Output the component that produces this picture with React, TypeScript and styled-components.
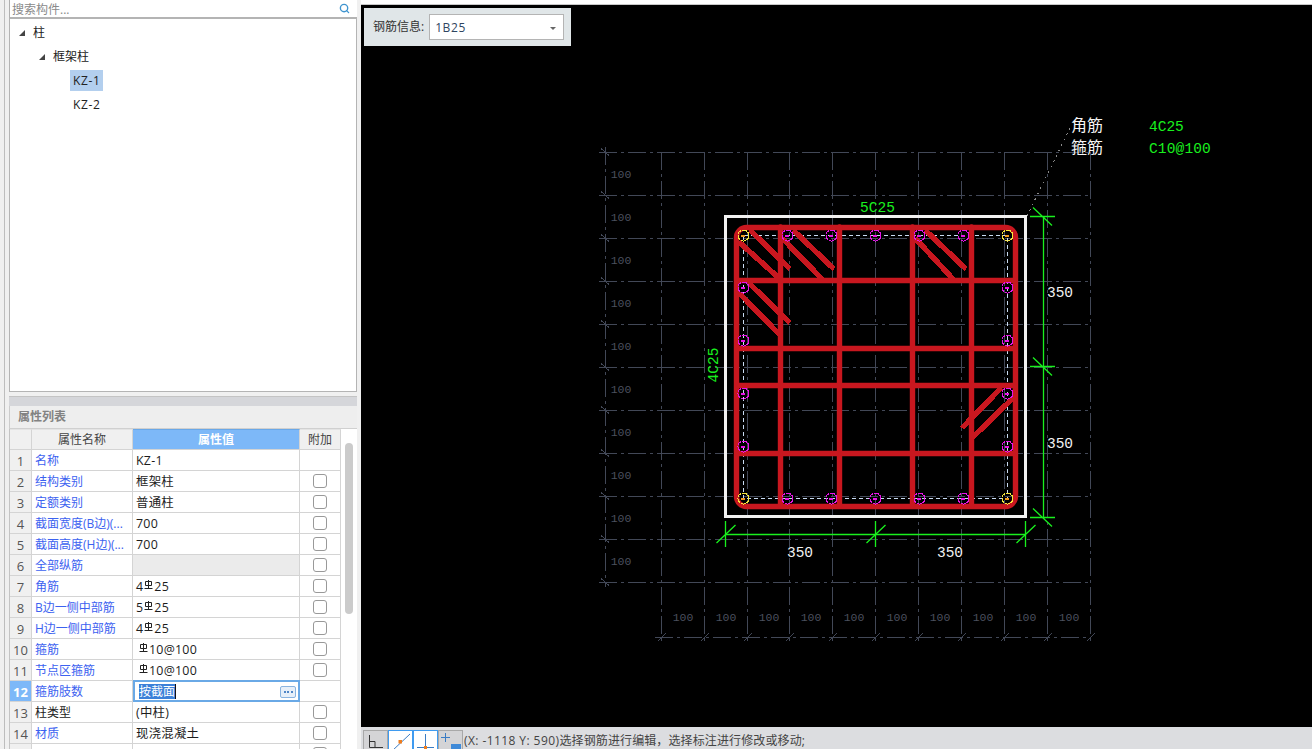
import React from 'react';
import styled, { createGlobalStyle } from 'styled-components';
import { Search } from 'lucide-react';

const UI_FONT = '"Open Sans", "Noto Sans CJK SC", sans-serif';
const CAD_FONT = '"Liberation Mono", "Noto Sans CJK SC", monospace';

const Global = createGlobalStyle`
  html, body { margin: 0; padding: 0; background: #f0f0f0; overflow: hidden; }
  * { box-sizing: border-box; }
`;

const Page = styled.div`
  width: 1312px; height: 749px; display: flex; overflow: hidden;
  font: 12px/1 ${UI_FONT}; color: #222;
`;
const LeftColumn = styled.aside`
  width: 361px; height: 749px; flex: none; padding-left: 4px; padding-right: 4px; background: #f0f0f0;
  display: flex; overflow: hidden;
`;
const LeftInner = styled.div`
  width: 353px; border-left: 1px solid #bdbdbd; padding-left: 4px; display: flex; flex-direction: column;
`;
const SearchBar = styled.div`
  height: 19px; flex: none; background: #fff; border-left: 1px solid #b0b0b0; border-bottom: 2px solid #b4b4b4;
  display: flex; align-items: center; justify-content: space-between; padding: 2px 7px 0 2px; color: #8a8a8a;
  svg { color: #3f94cf; margin-top: -2px; }
`;
const TreePanel = styled.div`
  height: 373px; flex: none; background: #fff; border: 1px solid #b4b4b4; border-top: 0; padding-top: 1px;
`;
const TreeRow = styled.div<{ $depth: number }>`
  height: 24px; display: flex; align-items: center; padding: 2px 0 0 ${p => 9 + p.$depth * 20}px; color: #222;
`;
const Arrow = styled.span`
  width: 6px; height: 6px; margin-right: 8px; background: #444; clip-path: polygon(100% 0, 100% 100%, 0 100%);
`;
const TreeLeaf = styled.span<{ $selected?: boolean }>`
  margin: -2px 0 0 11px; padding: 2px 3px 0; height: 21px; display: flex; align-items: center; letter-spacing: .6px;
  background: ${p => (p.$selected ? '#b3cfee' : 'transparent')};
`;
const Splitter = styled.div`
  margin-top: 4px; height: 10px; flex: none; background: #d5d6da; border-top: 1px solid #c4c4c4;
`;
const ListTitle = styled.div`
  height: 23px; flex: none; background: #eeeeee; color: #828282; font-weight: 600; border-bottom: 1px solid #d0d0d0;
  display: flex; align-items: center; padding-left: 8px; border-left: 1px solid #ccc;
`;
const TableWrap = styled.div`
  flex: 1; min-height: 0; display: flex; overflow: hidden; background: #fff; border-left: 1px solid #c4c4c4;
`;
const Table = styled.div` width: 331px; flex: none; `;
const Row = styled.div`
  display: grid; grid-template-columns: 22px 101px 167px 41px; height: 21px; 
`;
const Cell = styled.div`
  border-right: 1px solid #d4d4d4; border-bottom: 1px solid #d4d4d4; display: flex; align-items: center; overflow: hidden; white-space: nowrap;
`;
const HeadCell = styled(Cell)<{ $active?: boolean }>`
  justify-content: center;
  background: ${p => (p.$active ? '#7db8f8' : '#f0f0f0')};
  color: ${p => (p.$active ? '#fff' : '#444')};
  font-weight: ${p => (p.$active ? 700 : 400)};
  border-top: 1px solid ${p => (p.$active ? '#6aa8e8' : '#e4e4e4')};
`;
const NumCell = styled(Cell)<{ $active?: boolean }>`
  justify-content: center; font-size: 13px; padding-top: 2px;
  background: ${p => (p.$active ? '#7db8f8' : '#f0f0f0')};
  color: ${p => (p.$active ? '#fff' : '#555')};
  font-weight: ${p => (p.$active ? 700 : 400)};
`;
const NameCell = styled(Cell)<{ $plain?: boolean }>`
  padding: 2px 0 0 3px; color: ${p => (p.$plain ? '#222' : '#3c62f0')};
`;
const ValueCell = styled(Cell)<{ $muted?: boolean; $indent?: boolean }>`
  padding: 2px 0 0 ${p => (p.$indent ? 5 : 3)}px; color: #1c1c1c; background: ${p => (p.$muted ? '#ebebeb' : '#fff')};
  font-size: 12.4px; letter-spacing: .25px;
`;
const EditCell = styled(Cell)`
  border: 2px solid #6aa9e6; padding: 1px 2px 0 4px; justify-content: space-between; margin: -1px 0 0 0; height: 22px;
`;
const Selected = styled.span`
  background: #3b80d8; color: #fff; height: 15px; display: flex; align-items: center; border-right: 1px solid #111;
`;
const MoreButton = styled.span`
  width: 16px; height: 12px; border: 1px solid #8ab4e0; border-radius: 2px; background: #e6eff9;
  display: flex; align-items: center; justify-content: center; gap: 1.5px; 
  i { width: 2px; height: 2px; background: #4f86c6; display: block; }
`;
const CheckCell = styled(Cell)` justify-content: center; `;
const CheckBox = styled.span`
  width: 14px; height: 14px; border: 1px solid #999; border-radius: 3px; background: #fff; display: block;
`;
const ScrollTrack = styled.div`
  flex: 1; padding: 14px 4px 0 4px; background: #fff;
`;
const ScrollThumb = styled.div` width: 8px; height: 171px; background: #cbcbcb; border-radius: 4px; `;

const RightColumn = styled.main`
  flex: 1; min-width: 0; display: flex; flex-direction: column;
`;
const TopStrip = styled.div` height: 5px; flex: none; background: #fff; border-bottom: 1px solid #c8c8c8; `;
const Canvas = styled.div`
  position: relative; height: 722px; flex: none; background: #000;
  svg { display: block; }
`;
const RebarBar = styled.div`
  position: absolute; left: 3px; top: 3px; width: 207px; height: 38px; background: #e0e6e8;
  display: flex; align-items: center; padding-left: 9px; gap: 5px; color: #333;
`;
const Select = styled.div`
  width: 135px; height: 26px; background: #fff; border: 1px solid #b4b4b4; display: flex; align-items: center;
  justify-content: space-between; padding: 2px 7px 0 5px; color: #2f4560; letter-spacing: .6px;
`;
const Caret = styled.span`
  width: 0; height: 0; border-left: 3px solid transparent; border-right: 3px solid transparent; border-top: 3px solid #666;
`;
const StatusBar = styled.footer`
  flex: 1; background: #dcdde0; display: flex; padding: 3px 0 0 2px; overflow: hidden; color: #444;
`;
const ToolButton = styled.div<{ $on?: boolean }>`
  width: 25px; height: 24px; flex: none; margin-right: 0;
  border: 1px solid ${p => (p.$on ? '#3f9bf0' : '#a8a8a8')};
  background: ${p => (p.$on ? '#fff' : '#d4d4d6')};
  svg { display: block; }
`;
const StatusText = styled.div` line-height: 24px; white-space: nowrap; margin-left: 1px; margin-top: -1px; letter-spacing: .12px; `;
const Coords = styled.span` letter-spacing: .42px; `;
const RebarSvg = styled.svg` width: 9px; height: 11px; margin: -3px 1px 0 1px; flex: none; `;

function Rebar() {
  return (
    <RebarSvg viewBox="0 0 9 11" aria-hidden="true">
      <path d="M1.5 1.500h6v4h-6zM4.500 0v8.500M.5 8.500h8" fill="none" stroke="#222" strokeWidth="1" />
    </RebarSvg>
  );
}

type RowData = { name: string; value?: React.ReactNode; plain?: boolean; muted?: boolean; check?: boolean; indent?: boolean; edit?: boolean };
const rows: RowData[] = [
  { name: '名称', value: 'KZ-1', check: false },
  { name: '结构类别', value: '框架柱', check: true },
  { name: '定额类别', value: '普通柱', check: true },
  { name: '截面宽度(B边)(...', value: '700', check: true },
  { name: '截面高度(H边)(...', value: '700', check: true },
  { name: '全部纵筋', value: '', muted: true, check: true },
  { name: '角筋', value: <>4<Rebar />25</>, check: true },
  { name: 'B边一侧中部筋', value: <>5<Rebar />25</>, check: true },
  { name: 'H边一侧中部筋', value: <>4<Rebar />25</>, check: true },
  { name: '箍筋', value: <><Rebar />10@100</>, check: true, indent: true },
  { name: '节点区箍筋', value: <><Rebar />10@100</>, check: true, indent: true },
  { name: '箍筋肢数', edit: true, check: false },
  { name: '柱类型', value: '(中柱)', plain: true, check: true },
  { name: '材质', value: '现浇混凝土', check: true },
  { name: '', value: '', check: true },
];

const GX = Array.from({ length: 11 }, (_, i) => Math.round(660.6 + i * 42.95) + 0.5);
const GY = Array.from({ length: 11 }, (_, i) => 152.5 + i * 43);
const GRID = '#424857';
const DASH = '18 4 3 4';
const PINK = '#e814e8';
const YELLOW = '#f8e83c';
const RED = '#c8171f';
const GREEN = '#19f01e';

const topRow = [787, 831, 875, 919, 963];
const sideRow = [287, 340, 393, 446];
const diagonals: [number, number, number, number][] = [
  [750, 230, 790, 269], [739, 242, 780, 279], [782, 238, 822, 279], [793, 230, 834, 269],
  [749, 283, 790, 323], [739, 293, 780, 335], [915, 238, 953, 279], [925, 230, 966, 269],
  [1001, 388, 962, 428], [1013, 398, 972, 438],
];

function Bar({ x, y }: { x: number; y: number }) {
  const c = x === 743 || x === 1007;
  const corner = c && (y === 235 || y === 498);
  const col = corner ? YELLOW : PINK;
  return (
    <g shapeRendering="crispEdges">
      <circle cx={x + 0.5} cy={y + 0.5} r={5.5} fill="none" stroke={col} strokeWidth={1} strokeDasharray="5 1" />
      <rect x={x - 2} y={y} width={4} height={2} fill={corner ? '#f09a20' : PINK} />
    </g>
  );
}

function GreenTick({ x, y, dir }: { x: number; y: number; dir: 'h' | 'v' }) {
  return dir === 'h' ? (
    <path d={`M${x - 13} ${y}H${x + 12}M${x - 10} ${y - 9}L${x + 9} ${y + 9}`} stroke={GREEN} strokeWidth={1.3} fill="none" />
  ) : (
    <path d={`M${x} ${y - 13}V${y + 13}M${x - 9} ${y + 9}L${x + 10} ${y - 9}`} stroke={GREEN} strokeWidth={1.3} fill="none" />
  );
}

function Drawing() {
  return (
    <svg width={951} height={722} viewBox="361 5 951 722">
      <g stroke={GRID} strokeWidth={1} strokeDasharray={DASH} shapeRendering="crispEdges">
        {GY.map(y => <line key={y} x1={599} x2={1090.5} y1={y} y2={y} />)}
        {GX.map(x => <line key={x} x1={x} x2={x} y1={152} y2={645} />)}
        <line x1={605.5} x2={605.5} y1={147} y2={587} />
        <line x1={655} x2={1091} y1={637.5} y2={637.5} />
      </g>
      <g stroke={GRID} strokeWidth={1} shapeRendering="crispEdges">
        {GY.map(y => <line key={y} x1={601} x2={609} y1={y - 4} y2={y + 3} />)}
        {GX.map(x => <line key={x} x1={x - 4} x2={x + 4} y1={641.5} y2={633.5} />)}
      </g>
      <g fill="#4b505e" fontFamily={CAD_FONT} fontSize={11.5} textAnchor="middle">
        {GY.slice(0, 10).map(y => <text key={y} x={621} y={y + 25}>100</text>)}
        {GX.slice(0, 10).map(x => <text key={x} x={x + 21.5} y={621}>100</text>)}
      </g>

      <line x1={1027} y1={216} x2={1070} y2={128} stroke="#8a8a8a" strokeWidth={1} strokeDasharray="2 4" shapeRendering="crispEdges" />
      <rect x={725.5} y={216.5} width={300} height={300} fill="none" stroke="#f2f2f2" strokeWidth={3} shapeRendering="crispEdges" />
      <rect x={743.5} y={235.5} width={264} height={263} fill="none" stroke="#c9dcf2" strokeWidth={1} strokeDasharray="4 3" shapeRendering="crispEdges" />

      <g stroke={RED} strokeWidth={5.4} fill="none">
        <rect x={736.5} y={227.5} width={279} height={279} rx={10} />
        {[780.5, 839.5, 912.5, 971.5].map(x => <line key={x} x1={x} x2={x} y1={227} y2={506} strokeLinecap="round" />)}
        {[280.5, 348.5, 385.5, 453.5].map(y => <line key={y} x1={737} x2={1015} y1={y} y2={y} />)}
        {diagonals.map(d => <line key={d.join()} x1={d[0]} y1={d[1]} x2={d[2]} y2={d[3]} shapeRendering="crispEdges" />)}
      </g>

      <Bar x={743} y={235} />
      <Bar x={1007} y={235} />
      <Bar x={743} y={498} />
      <Bar x={1007} y={498} />
      {topRow.map(x => <React.Fragment key={x}><Bar x={x} y={235} /><Bar x={x} y={498} /></React.Fragment>)}
      {sideRow.map(y => <React.Fragment key={y}><Bar x={743} y={y} /><Bar x={1007} y={y} /></React.Fragment>)}

      <line x1={725} x2={1026} y1={534.5} y2={534.5} stroke={GREEN} strokeWidth={1.3} />
      <line x1={1043.5} x2={1043.5} y1={216} y2={517} stroke={GREEN} strokeWidth={1.3} />
      <GreenTick x={725.5} y={534} dir="v" />
      <GreenTick x={875.5} y={534} dir="v" />
      <GreenTick x={1025.5} y={534} dir="v" />
      <GreenTick x={1043} y={216.5} dir="h" />
      <GreenTick x={1043} y={366.5} dir="h" />
      <GreenTick x={1043} y={517.5} dir="h" />

      <g fontFamily={CAD_FONT} fontSize={14.5} fill="#f2f2f2" textAnchor="middle">
        <text x={1060} y={297}>350</text>
        <text x={1060} y={448}>350</text>
        <text x={800} y={557}>350</text>
        <text x={950} y={557}>350</text>
      </g>
      <g fontFamily={CAD_FONT} fontSize={14.5} fill={GREEN}>
        <text x={877.5} y={212} textAnchor="middle">5C25</text>
        <text x={1149} y={131}>4C25</text>
        <text x={1149} y={153} letterSpacing={0.15}>C10@100</text>
        <text transform="translate(718 365) rotate(-90)" textAnchor="middle">4C25</text>
      </g>
      <g fontFamily={CAD_FONT} fontSize={16} fill="#f5f5f5">
        <text x={1071} y={131}>角筋</text>
        <text x={1071} y={153}>箍筋</text>
      </g>
    </svg>
  );
}

export default function App() {
  return (
    <Page>
      <Global />
      <LeftColumn>
        <LeftInner>
          <SearchBar>
            <span>搜索构件...</span>
            <Search size={11} strokeWidth={3} />
          </SearchBar>
          <TreePanel>
            <TreeRow $depth={0}><Arrow />柱</TreeRow>
            <TreeRow $depth={1}><Arrow />框架柱</TreeRow>
            <TreeRow $depth={2}><TreeLeaf $selected>KZ-1</TreeLeaf></TreeRow>
            <TreeRow $depth={2}><TreeLeaf>KZ-2</TreeLeaf></TreeRow>
          </TreePanel>
          <Splitter />
          <ListTitle>属性列表</ListTitle>
          <TableWrap>
            <Table>
              <Row>
                <HeadCell />
                <HeadCell>属性名称</HeadCell>
                <HeadCell $active>属性值</HeadCell>
                <HeadCell>附加</HeadCell>
              </Row>
              {rows.map((r, i) => (
                <Row key={i}>
                  <NumCell $active={r.edit}>{i < 14 ? i + 1 : ''}</NumCell>
                  <NameCell $plain={r.plain}>{r.name}</NameCell>
                  {r.edit ? (
                    <EditCell>
                      <Selected>按截面</Selected>
                      <MoreButton><i /><i /><i /></MoreButton>
                    </EditCell>
                  ) : (
                    <ValueCell $muted={r.muted} $indent={r.indent}>{r.value}</ValueCell>
                  )}
                  <CheckCell>{r.check && <CheckBox />}</CheckCell>
                </Row>
              ))}
            </Table>
            <ScrollTrack><ScrollThumb /></ScrollTrack>
          </TableWrap>
        </LeftInner>
      </LeftColumn>
      <RightColumn>
        <TopStrip />
        <Canvas>
          <Drawing />
          <RebarBar>
            <span>钢筋信息:</span>
            <Select>1B25<Caret /></Select>
          </RebarBar>
        </Canvas>
        <StatusBar>
          <ToolButton>
            <svg width="23" height="22" viewBox="0 0 23 22"><path d="M5.500 4v12.500H19M5.500 10.500H11v6" fill="none" stroke="#333" /></svg>
          </ToolButton>
          <ToolButton $on>
            <svg width="23" height="22" viewBox="0 0 23 22"><path d="M3 20L21 3" stroke="#3a7cc4" /><rect x="9.500" y="9" width="3.500" height="3.500" fill="#ef7d1e" /></svg>
          </ToolButton>
          <ToolButton $on>
            <svg width="23" height="22" viewBox="0 0 23 22"><path d="M11.500 3v14M3 16.500h17" stroke="#3a7cc4" /><rect x="10" y="15" width="3" height="3" fill="#ef7d1e" /></svg>
          </ToolButton>
          <ToolButton>
            <svg width="23" height="22" viewBox="0 0 23 22"><path d="M6.500 2v9M2 6.500h9" stroke="#3a7cc4" /><rect x="12" y="13" width="10" height="6" fill="#3f8ad8" /></svg>
          </ToolButton>
          <StatusText><Coords>(X: -1118 Y: 590)</Coords>选择钢筋进行编辑，选择标注进行修改或移动;</StatusText>
        </StatusBar>
      </RightColumn>
    </Page>
  );
}
